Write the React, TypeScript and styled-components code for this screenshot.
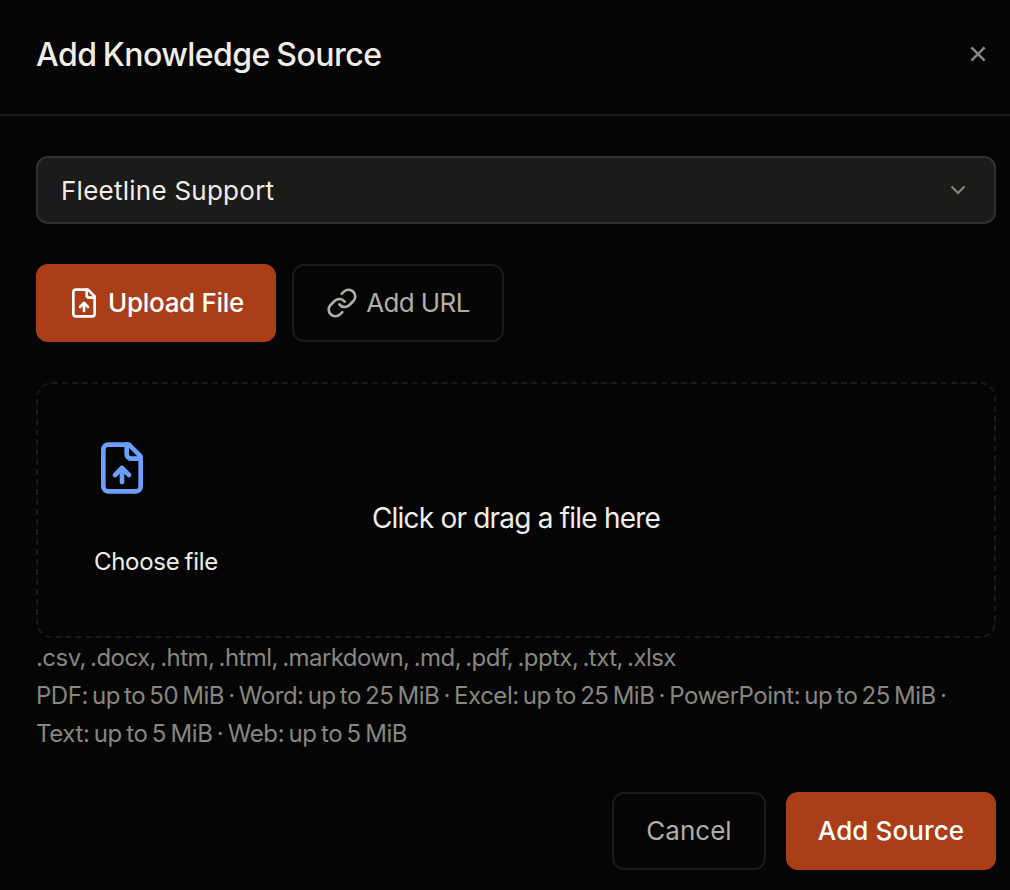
import React from 'react';
import styled, { createGlobalStyle, css } from 'styled-components';

const colors = {
  bg: '#050505',
  line: '#1a1a19',
  field: '#1b1b19',
  fieldLine: '#30302e',
  text: '#f0eee6',
  muted: '#b0aea5',
  faint: '#87867f',
  accent: '#a93e18',
  blue: '#6c9fff',
};

const GlobalStyle = createGlobalStyle`
  *, *::before, *::after { box-sizing: border-box; }
  body {
    margin: 0;
    background: ${colors.bg};
    color: ${colors.text};
    font-family: Inter, "Liberation Sans", sans-serif;
  }
  button { font: inherit; color: inherit; }
`;

const Dialog = styled.section`
  display: flex;
  flex-direction: column;
  width: 1010px;
  height: 890px;
  background: ${colors.bg};
  overflow: hidden;
`;

const Header = styled.header`
  display: flex;
  align-items: center;
  justify-content: space-between;
  height: 116px;
  padding: 0 14px 6px 36px;
  border-bottom: 2px solid ${colors.line};
`;

const Title = styled.h1`
  margin: 0;
  padding-top: 2px;
  font-size: 32px;
  font-weight: 500;
  line-height: 44px;
  letter-spacing: -0.54px;
  word-spacing: -1.5px;
  white-space: nowrap;
`;

const CloseButton = styled.button`
  display: flex;
  align-items: center;
  justify-content: center;
  width: 36px;
  height: 36px;
  padding: 0;
  border: 0;
  background: none;
  color: ${colors.faint};
`;

const Body = styled.div`
  display: flex;
  flex-direction: column;
  padding: 40px 14px 0 36px;
`;

const Select = styled.button`
  display: flex;
  align-items: center;
  justify-content: space-between;
  height: 68px;
  padding: 0 24px 0 23px;
  border: 2px solid ${colors.fieldLine};
  border-radius: 12px;
  background: ${colors.field};
  font-size: 26px;
  font-weight: 400;
  letter-spacing: 0.25px;
`;

const Tabs = styled.div`
  display: flex;
  gap: 16px;
  margin-top: 40px;
`;

const Button = styled.button<{ $primary?: boolean; $width: number; $spacing: number }>`
  display: flex;
  align-items: center;
  justify-content: center;
  gap: 8px;
  width: ${p => p.$width}px;
  height: 78px;
  padding: 0;
  border-radius: 12px;
  font-size: 26px;
  letter-spacing: ${p => p.$spacing}px;
  white-space: nowrap;
  ${p =>
    p.$primary
      ? css`
          border: 0;
          background: ${colors.accent};
          color: #fff;
          font-weight: 500;
        `
      : css`
          border: 2px solid ${colors.line};
          background: transparent;
          color: ${colors.muted};
          font-weight: 400;
        `}
`;

const ButtonText = styled.span`
  padding-bottom: 2px;
`;

const DropZone = styled.div`
  display: grid;
  grid-template-columns: 1fr auto 1fr;
  height: 256px;
  margin-top: 40px;
  padding: 56px;
  border: 2px dashed ${colors.line};
  border-radius: 16px;
`;

const FilePicker = styled.div`
  display: flex;
  flex-direction: column;
  gap: 47px;
`;

const PickerLabel = styled.span`
  font-size: 24px;
  font-weight: 400;
  line-height: 38px;
  letter-spacing: -0.3px;
  word-spacing: -1.2px;
  white-space: nowrap;
`;

const DropLabel = styled.span`
  align-self: center;
  padding-top: 14px;
  font-size: 28px;
  font-weight: 400;
  line-height: 38px;
  letter-spacing: -0.79px;
  white-space: nowrap;
`;

const Hints = styled.div`
  display: flex;
  flex-direction: column;
  margin-top: 1px;
  color: ${colors.faint};
  font-size: 24px;
  font-weight: 400;
  line-height: 38px;
`;

const HintLine = styled.span<{ $spacing: number; $word: number }>`
  letter-spacing: ${p => p.$spacing}px;
  word-spacing: ${p => p.$word}px;
  white-space: nowrap;
`;

const Footer = styled.footer`
  display: flex;
  justify-content: flex-end;
  gap: 20px;
  padding: 39px 14px 0 0;
`;

const FileUpIcon = ({ size }: { size: number }) => (
  <svg width={size} height={size} viewBox="0 0 24 24" fill="none" stroke="currentColor" strokeWidth={2} strokeLinecap="round" strokeLinejoin="round">
    <path d="M15 2H6a2 2 0 0 0-2 2v16a2 2 0 0 0 2 2h12a2 2 0 0 0 2-2V7Z" />
    <path d="M14 2v4a2 2 0 0 0 2 2h4" />
    <path d="M12 12v6" />
    <path d="m15 15-3-3-3 3" />
  </svg>
);

const LinkIcon = () => (
  <svg width={32} height={32} viewBox="0 0 24 24" fill="none" stroke="currentColor" strokeWidth={2} strokeLinecap="round" strokeLinejoin="round">
    <path d="M10 13a5 5 0 0 0 7.54.54l3-3a5 5 0 0 0-7.07-7.07l-1.72 1.71" />
    <path d="M14 11a5 5 0 0 0-7.54-.54l-3 3a5 5 0 0 0 7.07 7.07l1.71-1.71" />
  </svg>
);

const CloseIcon = () => (
  <svg width={16} height={16} viewBox="0 0 16 16" fill="none" stroke="currentColor" strokeWidth={2.6}>
    <path d="M1.4 1.4l13.2 13.2M14.6 1.4l-13.2 13.2" />
  </svg>
);

const ChevronIcon = () => (
  <svg width={24} height={24} viewBox="0 0 24 24" fill="none" stroke={colors.faint} strokeWidth={2}>
    <path d="M5.5 8.5l6.5 6.5L18.5 8.5" />
  </svg>
);

const BlueIcon = styled.span`
  display: flex;
  color: ${colors.blue};
`;

export default function App() {
  return (
    <>
      <GlobalStyle />
      <Dialog>
        <Header>
          <Title>Add Knowledge Source</Title>
          <CloseButton aria-label="Close">
            <CloseIcon />
          </CloseButton>
        </Header>
        <Body>
          <Select>
            Fleetline Support
            <ChevronIcon />
          </Select>
          <Tabs>
            <Button $primary $width={240} $spacing={-0.3}>
              <FileUpIcon size={32} />
              <ButtonText>Upload File</ButtonText>
            </Button>
            <Button $width={212} $spacing={-0.6}>
              <LinkIcon />
              <ButtonText>Add URL</ButtonText>
            </Button>
          </Tabs>
          <DropZone>
            <FilePicker>
              <BlueIcon>
                <FileUpIcon size={56} />
              </BlueIcon>
              <PickerLabel>Choose file</PickerLabel>
            </FilePicker>
            <DropLabel>Click or drag a file here</DropLabel>
          </DropZone>
          <Hints>
            <HintLine $spacing={-0.55} $word={-2}>
              .csv, .docx, .htm, .html, .markdown, .md, .pdf, .pptx, .txt, .xlsx
            </HintLine>
            <HintLine $spacing={-0.475} $word={-2.1}>
              PDF: up to 50 MiB · Word: up to 25 MiB · Excel: up to 25 MiB · PowerPoint: up to 25 MiB ·
            </HintLine>
            <HintLine $spacing={-0.39} $word={-2}>
              Text: up to 5 MiB · Web: up to 5 MiB
            </HintLine>
          </Hints>
        </Body>
        <Footer>
          <Button $width={154} $spacing={0}>
            <ButtonText>Cancel</ButtonText>
          </Button>
          <Button $primary $width={210} $spacing={0.1}>
            <ButtonText>Add Source</ButtonText>
          </Button>
        </Footer>
      </Dialog>
    </>
  );
}
